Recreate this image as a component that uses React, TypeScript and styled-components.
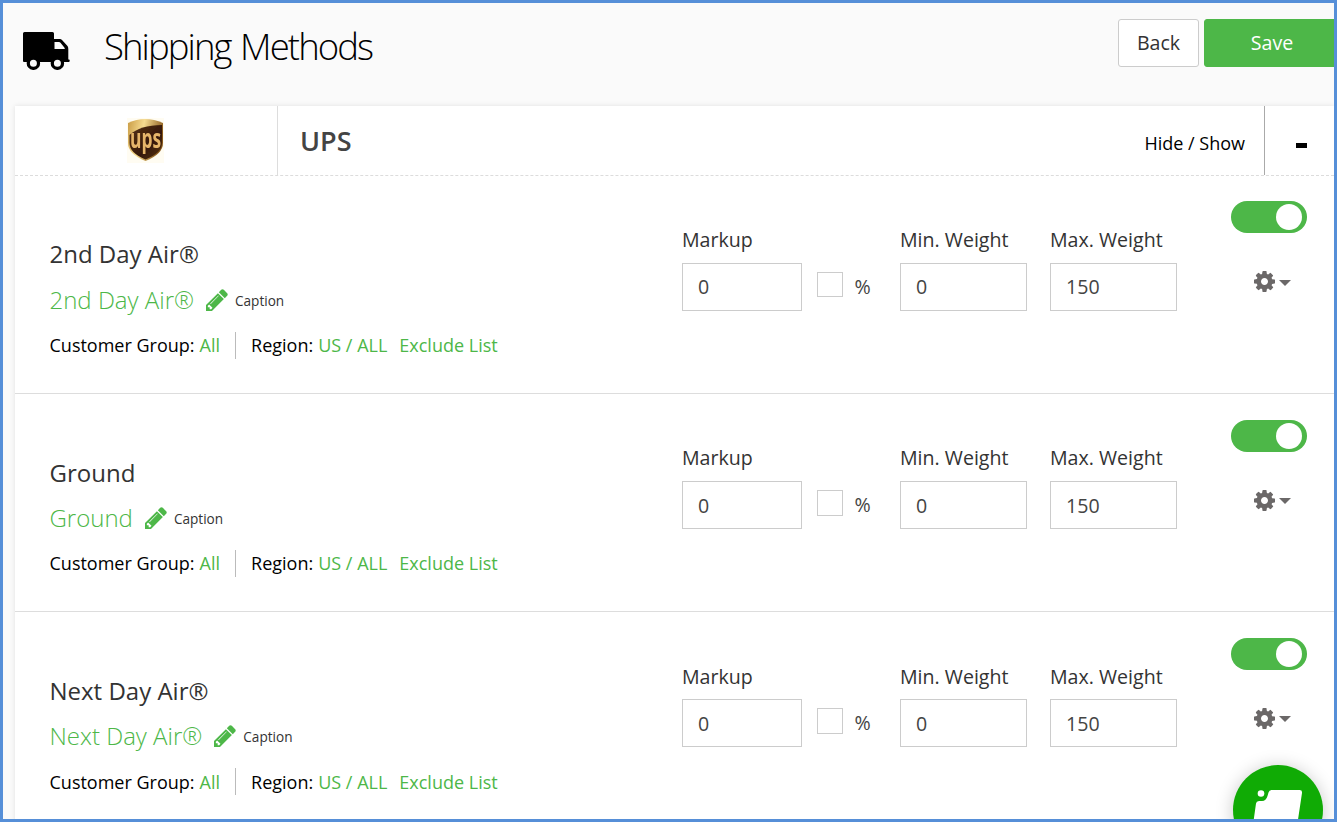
import React from "react";
import styled, { createGlobalStyle } from "styled-components";

const GlobalStyle = createGlobalStyle`
  * { box-sizing: border-box; }
  html, body { margin: 0; padding: 0; overflow: hidden; }
  body { font-family: "Open Sans", sans-serif; color: #333; background: #fafafa; }
  button { font-family: inherit; cursor: pointer; }
`;

const Frame = styled.div`
  position: relative;
  width: 1337px;
  height: 822px;
  border: 3px solid #568fd8;
  background: #fafafa;
  overflow: hidden;
`;

const Header = styled.header`
  height: 103px;
  display: flex;
  align-items: flex-start;
  padding-left: 20px;
`;

const TruckIcon = styled.svg`
  width: 47px;
  height: 38px;
  margin-top: 29px;
  flex: none;
`;

const Title = styled.h1`
  margin: 17px 0 0 34px;
  font-size: 36.5px;
  line-height: 53px;
  font-weight: 300;
  letter-spacing: -1.92px;
  word-spacing: 2px;
  color: #000;
  flex: 1;
  white-space: nowrap;
`;

const Button = styled.button<{ $primary?: boolean }>`
  height: 48px;
  margin-top: 16px;
  width: ${(p) => (p.$primary ? 136 : 81)}px;
  margin-left: ${(p) => (p.$primary ? 5 : 0)}px;
  margin-right: ${(p) => (p.$primary ? -6 : 0)}px;
  flex: none;
  padding: 0;
  font-size: 19.6px;
  line-height: 46px;
  border-radius: 3px;
  border: 1px solid ${(p) => (p.$primary ? "#4db748" : "#ccc")};
  background: ${(p) => (p.$primary ? "#4db748" : "#fff")};
  color: ${(p) => (p.$primary ? "#fff" : "#333")};
`;

const Panel = styled.main`
  margin-left: 12px;
  background: #fff;
  box-shadow: 0 0 5px rgba(0, 0, 0, 0.1);
`;

const CarrierBar = styled.div`
  height: 70px;
  display: flex;
  border-bottom: 1px dashed #dcdcdc;
`;

const CarrierLogo = styled.div`
  width: 263px;
  padding: 12px 0 0 112px;
  border-right: 1px solid #ddd;
  svg { display: block; overflow: visible; }
`;

const CarrierName = styled.h2`
  flex: 1;
  margin: 0;
  padding-left: 22px;
  font-size: 27px;
  line-height: 70px;
  font-weight: 600;
  color: #444;
`;

const HideShow = styled.div`
  width: 140px;
  padding-right: 19px;
  text-align: right;
  font-size: 18px;
  line-height: 74px;
  color: #000;
  border-right: 1px solid #aaa;
  white-space: nowrap;
`;

const Collapse = styled.div`
  width: 69px;
  padding: 37px 0 0 31px;
  &::before {
    content: "";
    display: block;
    width: 11px;
    height: 5px;
    background: #000;
  }
`;

const Row = styled.section`
  height: 218.2px;
  display: flex;
  border-bottom: 1px solid #ddd;
`;

const Info = styled.div`
  width: 667px;
  padding: 58.4px 0 0 34.5px;
  white-space: nowrap;
`;

const MethodName = styled.div`
  font-size: 24px;
  line-height: 40px;
`;

const CaptionLine = styled.div`
  display: flex;
  align-items: center;
  height: 50px;
  margin-top: -0.4px;
  margin-bottom: 0.15px;
  svg { margin: 2px 0 0 12px; width: 22px; height: 22px; }
`;

const CaptionName = styled.span`
  font-size: 24px;
  font-weight: 300;
  color: #4db748;
`;

const CaptionLabel = styled.span`
  margin: 2px 0 0 7px;
  font-size: 13.6px;
`;

const Meta = styled.div`
  display: flex;
  align-items: center;
  height: 42px;
  font-size: 18px;
  color: #000;
`;

const Link = styled.span<{ $gap?: number }>`
  color: #4db748;
  margin-left: ${(p) => p.$gap ?? 5}px;
`;

const Divider = styled.span`
  width: 1px;
  height: 27px;
  margin: 0 15px;
  background: #bbb;
`;

const Field = styled.label<{ $width: number; $gap?: number }>`
  width: ${(p) => p.$width}px;
  margin-right: ${(p) => p.$gap ?? 0}px;
  padding-top: 49.2px;
  flex: none;
  font-size: 19.6px;
  line-height: 30px;
  white-space: nowrap;
`;

const Input = styled.input`
  display: block;
  width: 100%;
  height: 48px;
  margin-top: 7.8px;
  padding: 0 15px;
  border: 1px solid #ccc;
  border-radius: 0;
  background: #fff;
  font: 19.6px "Open Sans", sans-serif;
  color: #444;
  outline: none;
`;

const Percent = styled.label`
  display: flex;
  width: 83px;
  padding-top: 96px;
  font-size: 19.6px;
  line-height: 29px;
  color: #444;
`;

const Checkbox = styled.span`
  width: 26px;
  height: 25.4px;
  margin-right: 11.5px;
  border: 1px solid #ccc;
`;

const Controls = styled.div`
  padding: 25.4px 0 0 54px;
`;

const Toggle = styled.div`
  width: 76px;
  height: 32px;
  padding: 3px 5px 0;
  display: flex;
  justify-content: flex-end;
  border-radius: 16px;
  background: #4db748;
  &::after {
    content: "";
    width: 26px;
    height: 26px;
    border-radius: 50%;
    background: #fff;
  }
`;

const Settings = styled.div`
  display: flex;
  align-items: center;
  margin: 38px 0 0 22.5px;
  svg { display: block; width: 21px; height: 21px; }
`;

const Caret = styled.span`
  margin: 2px 0 0 4px;
  border: 6px solid transparent;
  border-top-color: #6b6868;
  border-bottom: 0;
`;

const ChatButton = styled.div`
  position: absolute;
  left: 1230px;
  top: 762px;
  width: 90px;
  height: 90px;
  border-radius: 50%;
  background: #10ab05;
  box-shadow: 0 2px 18px rgba(0, 0, 0, 0.22);
  svg { display: block; }
`;

const methods = ["2nd Day Air®", "Ground", "Next Day Air®"];

const Truck = () => (
  <TruckIcon viewBox="0 0 47 38">
    <path
      fillRule="evenodd"
      d="M1.500 0H29.500Q31 0 31 1.500V7H37Q38 7 39 8L44.500 14Q45.300 15.200 45.300 17V27.500H46Q46.700 27.500 46.700 28.500V29Q46.700 30 45.500 30H40.970A6.700 6.700 0 1 1 27.830 30H16.970A6.700 6.700 0 1 1 3.830 30H1Q0 30 0 29V1.500Q0 0 1.500 0ZM31.500 10V17H41.800Q41.800 16 41.300 15.500L37.500 10.800Q36.800 10 36 10ZM10.400 27.700A3.500 3.500 0 1 0 10.400 34.700A3.500 3.500 0 1 0 10.400 27.700ZM34.400 27.700A3.500 3.500 0 1 0 34.400 34.700A3.500 3.500 0 1 0 34.400 27.700Z"
    />
  </TruckIcon>
);

const Pencil = () => (
  <svg viewBox="128 128 1536 1536" fill="#4db748">
    <path d="M491 1536l91-91-235-235-91 91v107h128v128h107zm523-928q0-22-22-22-10 0-17 7l-542 542q-7 7-7 17 0 22 22 22 10 0 17-7l542-542q7-7 7-17zm-54-192l416 416-832 832h-416v-416zm683 96q0 53-37 90l-166 166-416-416 166-165q36-38 90-38 53 0 91 38l235 234q37 39 37 91z" />
  </svg>
);

const Gear = () => (
  <svg viewBox="128 128 1536 1536" fill="#6b6868">
    <path d="M1152 896q0-106-75-181t-181-75-181 75-75 181 75 181 181 75 181-75 75-181zm512-109v222q0 12-8 23t-20 13l-185 28q-19 54-39 91 35 50 107 138 10 12 10 25t-9 23q-27 37-99 108t-94 71q-12 0-26-9l-138-108q-44 23-91 38-16 136-29 186-7 28-36 28h-222q-14 0-24.500-8.500t-11.500-21.500l-28-184q-49-16-90-37l-141 107q-10 9-25 9-14 0-25-11-126-114-165-168-7-10-7-23 0-12 8-23 15-21 51-66.500t54-70.500q-27-50-41-99l-183-27q-13-2-21-12.500t-8-23.500v-222q0-12 8-23t19-13l186-28q14-46 39-92-40-57-107-138-10-12-10-24 0-10 9-23 26-36 98.500-107.500t94.500-71.500q13 0 26 10l138 107q44-23 91-38 16-136 29-186 7-28 36-28h222q14 0 24.500 8.500t11.500 21.500l28 184q49 16 90 37l142-107q9-9 24-9 13 0 25 10 129 119 165 170 7 8 7 22 0 12-8 23-15 21-51 66.500t-54 70.500q26 50 41 98l183 28q13 2 21 12.500t8 23.500z" />
  </svg>
);

const UpsShield = () => (
  <svg width="37" height="45" viewBox="0 0 37 45">
    <defs>
      <linearGradient id="gold" x1="0" y1="0" x2="1" y2="0.3">
        <stop offset="0" stopColor="#c99b45" />
        <stop offset="0.45" stopColor="#f7dc90" />
        <stop offset="1" stopColor="#8a5a1c" />
      </linearGradient>
      <linearGradient id="brown" x1="0" y1="0" x2="1" y2="1">
        <stop offset="0" stopColor="#5b3518" />
        <stop offset="0.6" stopColor="#351808" />
        <stop offset="1" stopColor="#5a3717" />
      </linearGradient>
      <filter id="soft">
        <feGaussianBlur stdDeviation="0.5" />
      </filter>
    </defs>
    <rect width="37" height="45" fill="#fffcf2" />
    <g filter="url(#soft)">
      <path d="M1 5Q18-3 36 5V25Q36 36 18.500 43Q1 36 1 25Z" fill="url(#gold)" />
      <path d="M2.500 17Q13 7 35 7V25Q35 35 18.500 41.500Q2.500 35 2.500 25Z" fill="url(#brown)" />
      <text
        transform="translate(3 30) scale(0.67 1)"
        fontFamily="Open Sans, sans-serif"
        fontWeight="700"
        fontSize="26"
        fill="#e6b56a"
      >
        ups
      </text>
    </g>
  </svg>
);

const MethodRow = ({ name }: { name: string }) => (
  <Row>
    <Info>
      <MethodName>{name}</MethodName>
      <CaptionLine>
        <CaptionName>{name}</CaptionName>
        <Pencil />
        <CaptionLabel>Caption</CaptionLabel>
      </CaptionLine>
      <Meta>
        Customer Group: <Link>All</Link>
        <Divider />
        Region: <Link>US / ALL</Link>
        <Link $gap={12}>Exclude List</Link>
      </Meta>
    </Info>
    <Field $width={120} $gap={15}>
      Markup
      <Input defaultValue="0" />
    </Field>
    <Percent>
      <Checkbox />%
    </Percent>
    <Field $width={127} $gap={23}>
      Min. Weight
      <Input defaultValue="0" />
    </Field>
    <Field $width={127}>
      Max. Weight
      <Input defaultValue="150" />
    </Field>
    <Controls>
      <Toggle />
      <Settings>
        <Gear />
        <Caret />
      </Settings>
    </Controls>
  </Row>
);

export default function App() {
  return (
    <>
      <GlobalStyle />
      <Frame>
        <Header>
          <Truck />
          <Title>Shipping Methods</Title>
          <Button>Back</Button>
          <Button $primary>Save</Button>
        </Header>
        <Panel>
          <CarrierBar>
            <CarrierLogo>
              <UpsShield />
            </CarrierLogo>
            <CarrierName>UPS</CarrierName>
            <HideShow>Hide / Show</HideShow>
            <Collapse />
          </CarrierBar>
          {methods.map((name) => (
            <MethodRow key={name} name={name} />
          ))}
        </Panel>
        <ChatButton>
          <svg width="90" height="90" viewBox="0 0 90 90">
            <circle cx="28" cy="28.500" r="3.300" fill="#fff" />
            <path
              d="M38.500 25H66.500Q69.500 25 69 28L63 68Q62.600 70 60 70H22Q18.500 70 19 67L23 38.500Q23.300 36 26 36H29Q33 36 34.500 31L35.500 27.500Q36.200 25 38.500 25Z"
              fill="#fff"
            />
          </svg>
        </ChatButton>
      </Frame>
    </>
  );
}
